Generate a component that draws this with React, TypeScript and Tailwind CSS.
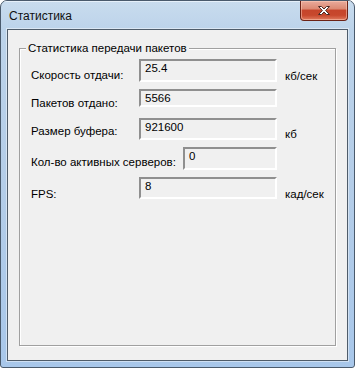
import React from "react";

const font = { fontFamily: '"Liberation Sans", Arial, sans-serif' };

function Box({ value, w = "w-[138px]", h = "h-[23px]" }: { value: string; w?: string; h?: string }) {
  return (
    <div
      className={`${w} ${h} shrink-0 border-2 border-t-[#8f8f8f] border-l-[#8f8f8f] border-b-[#ffffff] border-r-[#ffffff] bg-[#f0f0f0] px-[4px] text-[11.5px] leading-[14px] text-black`}
    >
      {value}
    </div>
  );
}

function CloseButton() {
  return (
    <div className="absolute right-[6px] top-0 flex h-[20px] w-[48px] items-center justify-center rounded-b-[4px] border border-t-0 border-[#6b2216] bg-[linear-gradient(#e9ab9c_0%,#dc8a74_40%,#c6452b_50%,#c8482d_75%,#e07a5e_100%)] shadow-[inset_0_0_0_1px_rgba(255,210,190,0.5)]">
      <svg width="14" height="11" viewBox="0 0 14 11">
        <path
          d="M1.5 1.5 L4.5 1.5 L7 4 L9.5 1.5 L12.5 1.5 L8.6 5.5 L12.5 9.5 L9.5 9.5 L7 7 L4.5 9.5 L1.5 9.5 L5.4 5.5 Z"
          fill="#ffffff"
          stroke="#4a2a25"
          strokeWidth="1"
          strokeLinejoin="round"
        />
      </svg>
    </div>
  );
}

export default function App() {
  return (
    <div className="h-[368px] w-[355px] bg-white" style={font}>
      <div className="relative flex h-[368px] w-[355px] flex-col overflow-hidden rounded-t-[7px] rounded-b-[3px] border border-[#4a5a6c] bg-[linear-gradient(180deg,#c9dcee_0%,#bcd3ea_8%,#b4cde8_50%,#a8c7ea_100%)]">
        {/* title bar */}
        <div className="relative h-[28px] shrink-0">
          <div className="absolute inset-x-0 top-0 h-[1px] bg-[#e6f0fa]" />
          <div className="pl-[8px] pt-[8px] text-[12px] leading-[14px] text-[#111]">Статистика</div>
          <CloseButton />
        </div>

        {/* client area */}
        <div className="mx-[6px] mb-[6px] flex-1 border border-[#4f5c6a] bg-[#f0f0f0] shadow-[0_0_0_1px_rgba(255,255,255,0.45)]">
          <div className="relative ml-[11px] mr-[11px] mt-[18px] h-[298px] border border-[#a0a0a0] shadow-[1px_1px_0_#ffffff,inset_1px_1px_0_#ffffff]">
            <div className="absolute left-[6px] top-[-8px] bg-[#f0f0f0] px-[2px] text-[11.5px] leading-[14px] text-black">
              Статистика передачи пакетов
            </div>

            <div className="flex flex-col pl-[11px] pt-[10px] text-[11.5px] leading-[14px] text-black">
              <div className="flex h-[30px]">
                <div className="mt-[9px] w-[108px] shrink-0">Скорость отдачи:</div>
                <Box value="25.4" />
                <div className="ml-[8px] mt-[10px]">кб/сек</div>
              </div>
              <div className="flex h-[29px]">
                <div className="mt-[7px] w-[108px] shrink-0">Пакетов отдано:</div>
                <Box value="5566" h="h-[18px]" />
              </div>
              <div className="flex h-[29px]">
                <div className="mt-[6px] w-[108px] shrink-0">Размер буфера:</div>
                <Box value="921600" h="h-[22px]" />
                <div className="ml-[8px] mt-[9px]">кб</div>
              </div>
              <div className="flex h-[30px]">
                <div className="mt-[8px] w-[152px] shrink-0">Кол-во активных серверов:</div>
                <Box value="0" w="w-[94px]" />
              </div>
              <div className="flex h-[30px]">
                <div className="mt-[10px] w-[108px] shrink-0">FPS:</div>
                <Box value="8" h="h-[22px]" />
                <div className="ml-[8px] mt-[10px]">кад/сек</div>
              </div>
            </div>
          </div>
        </div>
      </div>
    </div>
  );
}
